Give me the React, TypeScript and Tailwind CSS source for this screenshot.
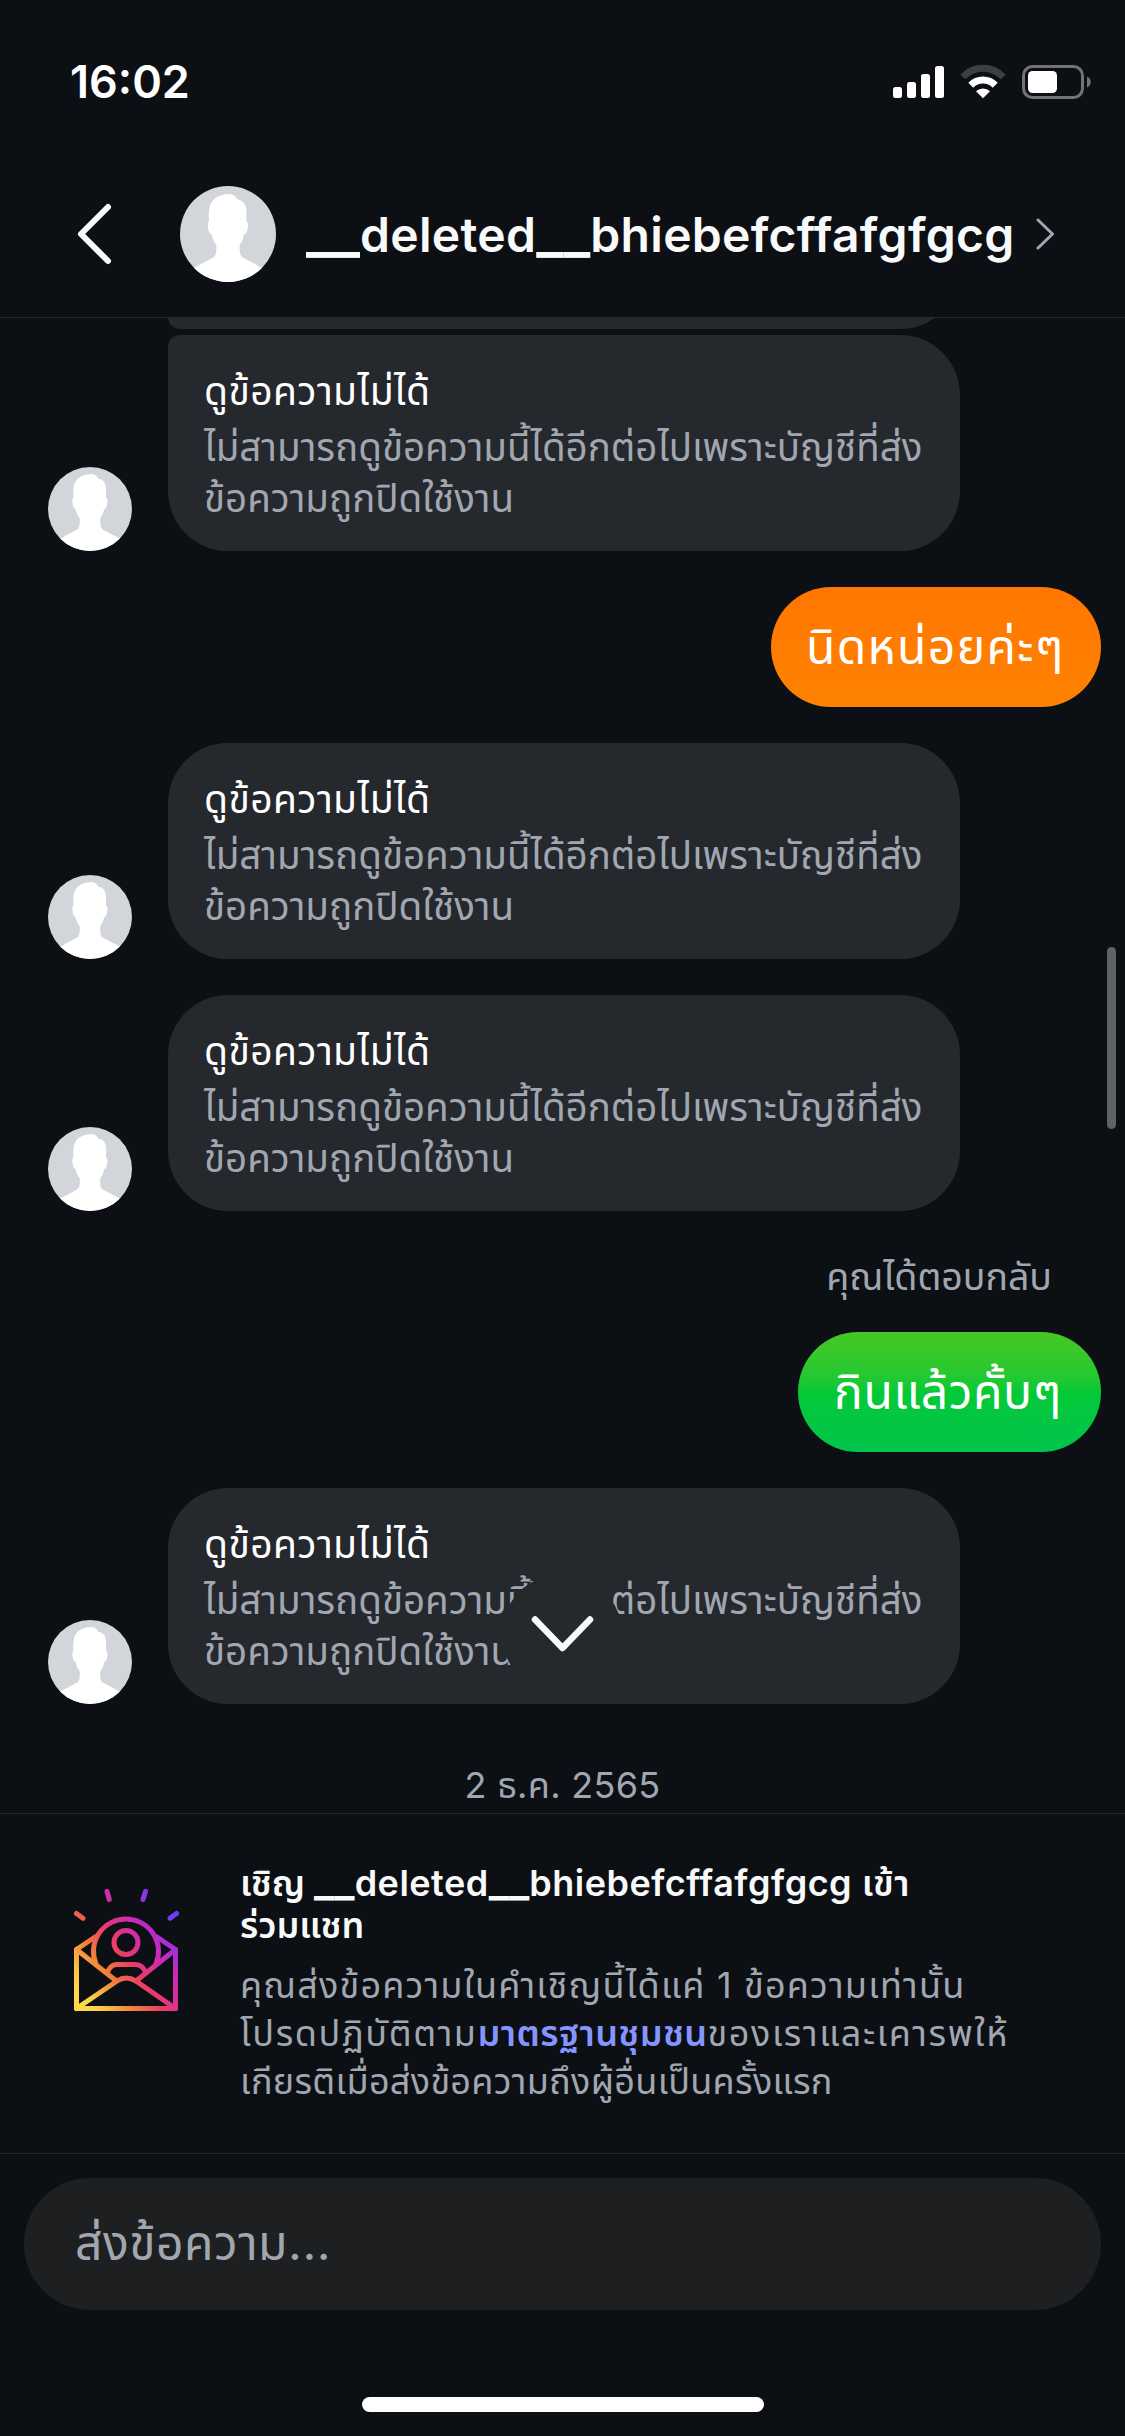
import { ReactNode } from 'react';

function Username() {
  return (
    <>
      <span className="text-[1.2em] leading-[0] tracking-normal">__</span>deleted
      <span className="text-[1.2em] leading-[0] tracking-normal">__</span>bhiebefcffafgfgcg
    </>
  );
}

function Avatar({ className }: { className: string }) {
  return (
    <svg viewBox="0 0 96 96" className={`shrink-0 rounded-full ${className}`}>
      <rect width="96" height="96" fill="#d2d5da" />
      <path
        fill="#fff"
        d="M29 35.500C28.500 29 28.800 23 30.500 18.500C33 12 41 8 49 8C53 8 56 10 57.500 13.500C62.500 13.800 66.300 18 66.500 25L66.300 35.500C68 36 68.300 38 67.800 41.500C67.300 45.500 66 48 64 48.300C63.500 52.500 62 56 59.700 58.500C59.500 64 59.500 69 62.500 71.500L81.500 81.500V96H14.500V81.500L33.500 71.500C36.500 69 36.500 64 36.300 58.500C34 56 32.200 52.500 31.700 48.300C29.700 48 28.500 45.500 28 41.500C27.500 38 27.800 36 29 35.500Z"
      />
    </svg>
  );
}

function StatusBar() {
  return (
    <div className="flex h-[150px] shrink-0 items-start justify-between pt-[54px] pr-[34px] pl-[70px]">
      <div className="text-[45px] leading-[56px] font-semibold text-white">16:02</div>
      <svg width="199" height="36" viewBox="0 0 199 36" className="mt-[10px]">
        <g fill="#fff">
          <rect x="1" y="23" width="9" height="11" rx="2.500" />
          <rect x="15" y="18" width="9" height="16" rx="2.500" />
          <rect x="29" y="10" width="9" height="24" rx="2.500" />
          <rect x="43" y="2" width="9" height="32" rx="2.500" />
        </g>
        <g fill="none" strokeWidth="7">
          <path d="M70.800 13A27.500 27.500 0 0 1 111.200 13" stroke="#3c3f42" />
          <path d="M78.800 21.200A17 17 0 0 1 103.200 21.200" stroke="#fff" />
        </g>
        <path d="M91 34.300L84 27.300A10 10 0 0 1 98 27.300Z" fill="#fff" />
        <rect x="131.500" y="2.500" width="59" height="31" rx="9" fill="none" stroke="#717376" strokeWidth="3" />
        <rect x="136" y="7" width="29" height="22" rx="4.500" fill="#fff" />
        <path d="M195 12.500C200 14.500 200 21.500 195 23.500Z" fill="#717376" />
      </svg>
    </div>
  );
}

function ChatHeader() {
  return (
    <div className="flex h-[168px] shrink-0 items-center border-b border-[#25282d] pl-[76px]">
      <svg width="36" height="62" viewBox="0 0 36 62" fill="none" stroke="#f8f9f9" strokeWidth="6" strokeLinecap="round" strokeLinejoin="round">
        <path d="M32 4L5 31L32 58" />
      </svg>
      <Avatar className="ml-[68px] h-24 w-24" />
      <div className="ml-[30px] w-[708px] pt-[2px] text-[48px] leading-[60px] font-semibold tracking-[0.3px] whitespace-nowrap text-[#f8f9f9]">
        <Username />
      </div>
      <svg width="22" height="32" viewBox="0 0 22 32" className="ml-[21px]" fill="none" stroke="#a0a7b1" strokeWidth="3" strokeLinecap="round" strokeLinejoin="round">
        <path d="M3 2L17.500 16L3 30" />
      </svg>
    </div>
  );
}

function Received({ corner = 'rounded-[60px]', children }: { corner?: string; children?: ReactNode }) {
  return (
    <div className="flex items-end pl-12">
      <Avatar className="h-[84px] w-[84px]" />
      <div className={`relative ml-9 h-[216px] w-[792px] bg-[#25282d] pt-[29px] pl-[36px] whitespace-nowrap ${corner}`}>
        <p className="text-[39px] leading-[54px] tracking-[0.4px] text-white">ดูข้อความไม่ได้</p>
        <div className="mt-[4px] text-[38.5px] leading-[51px] text-[#a0a7b1]">
          <p>ไม่สามารถดูข้อความนี้ได้อีกต่อไปเพราะบัญชีที่ส่ง</p>
          <p>ข้อความถูกปิดใช้งาน</p>
        </div>
        {children}
      </div>
    </div>
  );
}

function Sent({ className, children }: { className: string; children: ReactNode }) {
  return (
    <div className={`mr-6 flex h-[120px] items-center self-end rounded-[60px] text-[48px] leading-[60px] whitespace-nowrap text-white ${className}`}>
      {children}
    </div>
  );
}

function InviteIcon() {
  return (
    <svg width="108" height="124" viewBox="0 0 108 124" fill="none" stroke="url(#invite)" strokeWidth="5" strokeLinecap="round" strokeLinejoin="round">
      <defs>
        <linearGradient id="invite" gradientUnits="userSpaceOnUse" x1="12" y1="112" x2="110" y2="40">
          <stop offset="0" stopColor="#fcd94a" />
          <stop offset="0.080" stopColor="#fbc844" />
          <stop offset="0.280" stopColor="#f38138" />
          <stop offset="0.480" stopColor="#ec3a68" />
          <stop offset="0.740" stopColor="#c529c0" />
          <stop offset="1" stopColor="#6c3cf5" />
        </linearGradient>
      </defs>
      <path d="M3.500 24.500L10 29.200M34 2.500L36.300 10.500M72.500 2.500L70 10.500M103.500 24.500L97 29.200" />
      <path d="M22 48L3.500 60.500V119.500H102.500V60.500L84 48" />
      <path d="M3.500 60.500L43.500 92M102.500 60.500L63 92" />
      <path d="M3.500 119.500L44 92Q53 86 63 92L102.500 119.500" />
      <path d="M23 75A32.500 32.500 0 1 1 83 75" />
      <circle cx="53" cy="53.500" r="12" />
      <path d="M35 82Q38 75.500 44 75.500H62Q69 75.500 72 82" />
    </svg>
  );
}

export default function App() {
  return (
    <div className="relative flex h-[2436px] w-[1125px] flex-col overflow-hidden bg-[#0c0f14] font-['Inter','Noto_Sans_Thai','Noto_Sans',sans-serif]">
      <StatusBar />
      <ChatHeader />

      <div className="relative flex h-[1496px] shrink-0 flex-col overflow-hidden border-b border-[#25282d]">
        <div className="ml-[168px] h-[11px] w-[792px] overflow-hidden">
          <div className="-mt-[109px] h-[120px] rounded-[60px] rounded-bl-[12px] bg-[#25282d]" />
        </div>
        <div className="mt-[6px] flex flex-col gap-9">
          <Received corner="rounded-[60px] rounded-tl-[12px]" />
          <Sent className="w-[330px] bg-linear-to-b from-[#ff7700] to-[#ff8200] pl-[35px] tracking-[1.3px]">นิดหน่อยค่ะๆ</Sent>
          <Received />
          <Received />
        </div>
        <div className="mt-[40px] mr-[73px] self-end text-[37.5px] leading-[51px] whitespace-nowrap text-[#a0a7b1]">
          คุณได้ตอบกลับ
        </div>
        <div className="mt-[30px] flex flex-col gap-9">
          <Sent className="w-[303px] bg-linear-to-b from-[#45c823] via-[#04c936] to-[#02c44d] pl-[36px] tracking-[0.6px]">กินแล้วคั้บๆ</Sent>
          <Received>
            <div className="absolute top-[86px] left-[334px] flex h-[120px] w-[120px] items-center justify-center rounded-full bg-[#25282d]">
              <svg width="64" height="38" viewBox="0 0 64 38" fill="none" stroke="#f8f9f9" strokeWidth="6.500" strokeLinecap="round" strokeLinejoin="round">
                <path d="M5 4.500L32.500 33L60 4.500" />
              </svg>
            </div>
          </Received>
        </div>
        <div className="mt-[56px] text-center text-[36px] leading-[51px] tracking-[0.3px] whitespace-nowrap text-[#a0a7b1]">
          2 ธ.ค. 2565
        </div>
        <div className="absolute top-[629px] right-[9px] h-[182px] w-[9px] rounded-full bg-[#606266]" />
      </div>

      <div className="flex h-[340px] shrink-0 border-b border-[#25282d] pl-[73px]">
        <div className="w-[167px] pt-[75px]">
          <InviteIcon />
        </div>
        <div className="pt-[48px] whitespace-nowrap">
          <div className="text-[36px] leading-[42px] font-semibold text-[#f8f9f9]">
            <p className="h-[42px]">
              เชิญ <span className="tracking-[0.5px]"><Username /> เข้า</span>
            </p>
            <p>ร่วมแชท</p>
          </div>
          <div className="mt-[15px] text-[36px] leading-[48px] text-[#a0a7b1]">
            <p className="tracking-[1.2px]">คุณส่งข้อความในคำเชิญนี้ได้แค่ 1 ข้อความเท่านั้น</p>
            <p className="tracking-[1.6px]">
              โปรดปฏิบัติตาม<span className="font-semibold tracking-[0.4px] text-[#8595ff]">มาตรฐานชุมชน</span>ของเราและเคารพให้
            </p>
            <p className="tracking-[0.3px]">เกียรติเมื่อส่งข้อความถึงผู้อื่นเป็นครั้งแรก</p>
          </div>
        </div>
      </div>

      <div className="mx-6 mt-6 flex h-[132px] shrink-0 items-center rounded-[66px] bg-[#1e1f21] pb-[2px] pl-[51px] text-[48px] leading-[60px] tracking-[0.5px] text-[#a0a7b1]">
        ส่งข้อความ...
      </div>
      <div className="mx-auto mt-[87px] h-[15px] w-[402px] shrink-0 rounded-full bg-white" />
    </div>
  );
}
